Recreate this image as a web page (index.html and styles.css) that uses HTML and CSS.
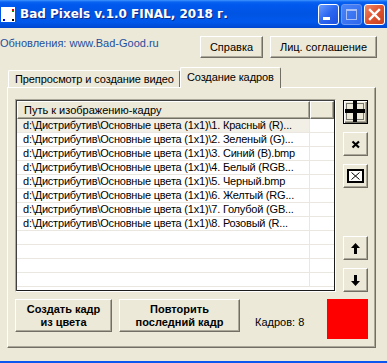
FILE: index.html
```html
<html lang="ru">
<head>
  <meta charset="UTF-8">
  <title>Bad Pixels v.1.0 FINAL, 2018 г.</title>
  <link rel="stylesheet" href="styles.css">
</head>
<body>
  <div class="titlebar">
    <svg class="app-icon" width="14" height="15" viewBox="0 0 14 15">
      <rect width="14" height="15" fill="#fff"/>
      <rect x="11" y="2" width="2" height="2" fill="#e00000"/>
      <rect x="11" y="4" width="2" height="1" fill="#00a000"/>
      <rect x="2" y="12" width="2" height="2" fill="#0000e0"/>
      <rect x="11" y="12" width="2" height="2" fill="#000"/>
    </svg>
    <span class="title">Bad Pixels v.1.0 FINAL, 2018 г.</span>
    <div class="win-buttons">
      <span class="win-btn">
        <svg width="21" height="21" viewBox="0 0 21 21"><rect x="5" y="13" width="7" height="3" fill="#fff"/></svg>
      </span>
      <span class="win-btn disabled">
        <svg width="21" height="21" viewBox="0 0 21 21"><rect x="5.5" y="5.5" width="10" height="10" fill="none" stroke="#a9c0f6" stroke-width="1"/><rect x="5" y="5" width="11" height="2" fill="#a9c0f6"/></svg>
      </span>
      <span class="win-btn close">
        <svg width="21" height="21" viewBox="0 0 21 21"><path d="M6 6 L15 15 M15 6 L6 15" stroke="#fff" stroke-width="2.4" stroke-linecap="square"/></svg>
      </span>
    </div>
  </div>

  <div class="toprow">
    <span class="link">Обновления: www.Bad-Good.ru</span>
    <div class="top-buttons">
      <button class="btn help">Справка</button>
      <button class="btn license">Лиц. соглашение</button>
    </div>
  </div>

  <div class="tabs">
    <div class="tab">Препросмотр и создание видео</div>
    <div class="tab active">Создание кадров</div>
  </div>

  <div class="panel">
    <div class="work">
      <div class="listview">
        <div class="lv-header">
          <div class="col-path">Путь к изображению-кадру</div>
          <div class="col-extra"></div>
        </div>
        <div class="lv-row focus"><div class="col-path">d:\Дистрибутив\Основные цвета (1x1)\1. Красный (R)...</div><div class="col-extra"></div></div>
        <div class="lv-row"><div class="col-path">d:\Дистрибутив\Основные цвета (1x1)\2. Зеленый (G)...</div><div class="col-extra"></div></div>
        <div class="lv-row"><div class="col-path">d:\Дистрибутив\Основные цвета (1x1)\3. Синий (B).bmp</div><div class="col-extra"></div></div>
        <div class="lv-row"><div class="col-path">d:\Дистрибутив\Основные цвета (1x1)\4. Белый (RGB...</div><div class="col-extra"></div></div>
        <div class="lv-row"><div class="col-path">d:\Дистрибутив\Основные цвета (1x1)\5. Черный.bmp</div><div class="col-extra"></div></div>
        <div class="lv-row"><div class="col-path">d:\Дистрибутив\Основные цвета (1x1)\6. Желтый (RG...</div><div class="col-extra"></div></div>
        <div class="lv-row"><div class="col-path">d:\Дистрибутив\Основные цвета (1x1)\7. Голубой (GB...</div><div class="col-extra"></div></div>
        <div class="lv-row"><div class="col-path">d:\Дистрибутив\Основные цвета (1x1)\8. Розовый (R...</div><div class="col-extra"></div></div>
        <div class="lv-row"><div class="col-path"></div><div class="col-extra"></div></div>
        <div class="lv-row"><div class="col-path"></div><div class="col-extra"></div></div>
        <div class="lv-row"><div class="col-path"></div><div class="col-extra"></div></div>
        <div class="lv-row"><div class="col-path"></div><div class="col-extra"></div></div>
      </div>

      <div class="side">
        <button class="btn icon default" aria-label="Добавить">
          <svg width="23" height="22" viewBox="0 0 23 22">
            <rect x="2.5" y="2.5" width="17" height="16" fill="none" stroke="#000" stroke-width="1" stroke-dasharray="1 1"/>
            <rect x="9" y="0" width="4" height="21" fill="#000"/>
            <rect x="1" y="8" width="20" height="4" fill="#000"/>
          </svg>
        </button>
        <button class="btn icon" aria-label="Удалить">
          <svg width="10" height="9" viewBox="0 0 10 9">
            <path d="M1.5 1.5 L8 7.5 M8 1.5 L1.5 7.5" stroke="#000" stroke-width="2.2"/>
          </svg>
        </button>
        <button class="btn icon" aria-label="Очистить">
          <svg width="17" height="14" viewBox="0 0 17 14">
            <rect x="1" y="1" width="15" height="12" fill="#fff" stroke="#000" stroke-width="2"/>
            <path d="M4.5 3.5 L12.5 10.5 M12.5 3.5 L4.5 10.5" stroke="#000" stroke-width="1"/>
          </svg>
        </button>
        <button class="btn icon up" aria-label="Вверх">
          <svg width="9" height="11" viewBox="0 0 9 11">
            <path d="M4.5 0 L9 5 L6 5 L6 11 L3 11 L3 5 L0 5 Z" fill="#000"/>
          </svg>
        </button>
        <button class="btn icon" aria-label="Вниз">
          <svg width="9" height="11" viewBox="0 0 9 11">
            <path d="M4.5 11 L9 6 L6 6 L6 0 L3 0 L3 6 L0 6 Z" fill="#000"/>
          </svg>
        </button>
      </div>
    </div>

    <div class="actions">
      <button class="btn bold create">Создать кадр<br>из цвета</button>
      <button class="btn bold repeat">Повторить<br>последний кадр</button>
      <span class="count">Кадров: 8</span>
      <div class="swatch"></div>
    </div>
  </div>

  <div class="frame-bottom"></div>
</body>
</html>
```

FILE: styles.css
```css
/* Window */
body {
  margin: 0;
  width: 387px;
  height: 363px;
  overflow: hidden;
  background-color: #ece9d8;
  font-family: 'Liberation Sans', Tahoma, sans-serif;
  font-size: 11px;
  color: #000;
  display: flex;
  flex-direction: column;
}

.titlebar {
  height: 28px;
  flex: none;
  display: flex;
  align-items: center;
  background: linear-gradient(#3d95ff 0, #0a62f2 2px, #0058ee 5px, #0054e3 14px, #0058ec 22px, #0046d0 28px);
  color: #fff;
}

.app-icon {
  margin-left: 1px;
  margin-top: 1px;
}

.title {
  margin-left: 5px;
  font-family: 'DejaVu Sans', sans-serif;
  font-weight: bold;
  font-size: 12px;
  text-shadow: 1px 1px 0 #0a2a8a;
}

.win-buttons {
  margin-left: auto;
  margin-right: 2px;
  display: flex;
  gap: 2px;
}

.win-btn {
  width: 21px;
  height: 21px;
  box-sizing: border-box;
  border: 1px solid #fff;
  border-radius: 3px;
  background: linear-gradient(135deg, #6a9cff 0, #2a66f0 50%, #1c50e0 100%);
  display: flex;
}

.win-btn svg {
  margin: -1px;
}

.win-btn.disabled {
  border-color: #6d97f0;
  background: linear-gradient(135deg, #4a84f8, #2f68ec);
}

.win-btn.close {
  background: linear-gradient(135deg, #f08a6a 0, #e0522e 50%, #c8401c 100%);
}

/* Top row */
.toprow {
  height: 30px;
  flex: none;
  display: flex;
  align-items: flex-start;
  padding-top: 8px;
  box-sizing: border-box;
}

.link {
  color: #1f4f9e;
  margin-top: 1px;
}

.top-buttons {
  margin-left: auto;
  margin-right: 10px;
  display: flex;
  gap: 7px;
}

.btn {
  font-family: 'Liberation Sans', Tahoma, sans-serif;
  font-size: 11px;
  color: #000;
  background-color: #ece9d8;
  border: 1px solid;
  border-color: #fff #716f64 #716f64 #fff;
  box-shadow: inset -1px -1px 0 #aca899;
  padding: 0;
  margin: 0;
  display: flex;
  align-items: center;
  justify-content: center;
}

.help {
  width: 63px;
  height: 22px;
}

.license {
  width: 107px;
  height: 22px;
}

/* Tabs */
.tabs {
  height: 29px;
  flex: none;
  display: flex;
  align-items: flex-end;
  padding-left: 8px;
  box-sizing: border-box;
}

.tab {
  height: 16px;
  padding: 0 5px 0 6px;
  border: 1px solid;
  border-bottom: none;
  border-color: #fff #716f64 #fff #fff;
  border-radius: 2px 2px 0 0;
  display: flex;
  align-items: center;
  letter-spacing: -0.1px;
}

.tab.active {
  height: 21px;
  margin-bottom: -1px;
  position: relative;
  padding: 0 6px 3px 6px;
  box-sizing: border-box;
  background-color: #ece9d8;
  border-left-color: #fff;
}

/* Panel */
.panel {
  width: 369px;
  height: 261px;
  margin-left: 7px;
  box-sizing: border-box;
  border: 1px solid;
  border-color: #fff #716f64 #716f64 #fff;
  box-shadow: inset -1px -1px 0 #aca899;
  padding: 11px 0 0 7px;
  display: flex;
  flex-direction: column;
  gap: 7px;
}

.work {
  display: flex;
  gap: 7px;
}

.listview {
  width: 321px;
  height: 193px;
  box-sizing: border-box;
  border: 1px solid;
  border-color: #aca899 #fff #fff #aca899;
  box-shadow: inset 1px 1px 0 #404040, inset -1px -1px 0 #1c1c1c;
  padding: 1px;
  background-color: #fff;
  overflow: hidden;
}

.lv-header {
  height: 18px;
  display: flex;
}

.lv-header > div {
  box-sizing: border-box;
  background-color: #ece9d8;
  border: 1px solid;
  border-color: #fff #716f64 #716f64 #fff;
  box-shadow: inset -1px -1px 0 #aca899;
  display: flex;
  align-items: center;
  padding-left: 6px;
}

.col-path {
  width: 293px;
  flex: none;
  white-space: nowrap;
  overflow: hidden;
}

.col-extra {
  flex: 1;
}

.lv-row {
  height: 14px;
  display: flex;
  box-sizing: border-box;
  border-bottom: 1px solid #e9e7df;
}

.lv-row .col-path {
  padding-left: 6px;
  box-sizing: border-box;
  border-right: 1px solid #e9e7df;
  line-height: 13px;
  letter-spacing: -0.2px;
}

.lv-row.focus .col-path {
  background-color: #f1efe6;
}

.side {
  display: flex;
  flex-direction: column;
  gap: 8px;
  padding-top: 1px;
}

.btn.icon {
  width: 25px;
  height: 24px;
}

.btn.default {
  border: 1px solid #000;
  box-shadow: inset 1px 1px 0 #fff, inset -1px -1px 0 #716f64, inset -2px -2px 0 #aca899;
}

.side .up {
  margin-top: 40px;
}

/* Bottom actions */
.actions {
  display: flex;
  align-items: flex-start;
}

.btn.bold {
  font-weight: bold;
  line-height: 13px;
  height: 33px;
}

.create {
  width: 97px;
}

.repeat {
  width: 121px;
  margin-left: 7px;
}

.count {
  margin-left: 15px;
  margin-top: 17px;
}

.swatch {
  width: 41px;
  height: 40px;
  margin-left: auto;
  margin-right: 7px;
  background-color: #ff0000;
}

.frame-bottom {
  margin-top: auto;
  height: 2px;
  background-color: #0a56ee;
}
```
